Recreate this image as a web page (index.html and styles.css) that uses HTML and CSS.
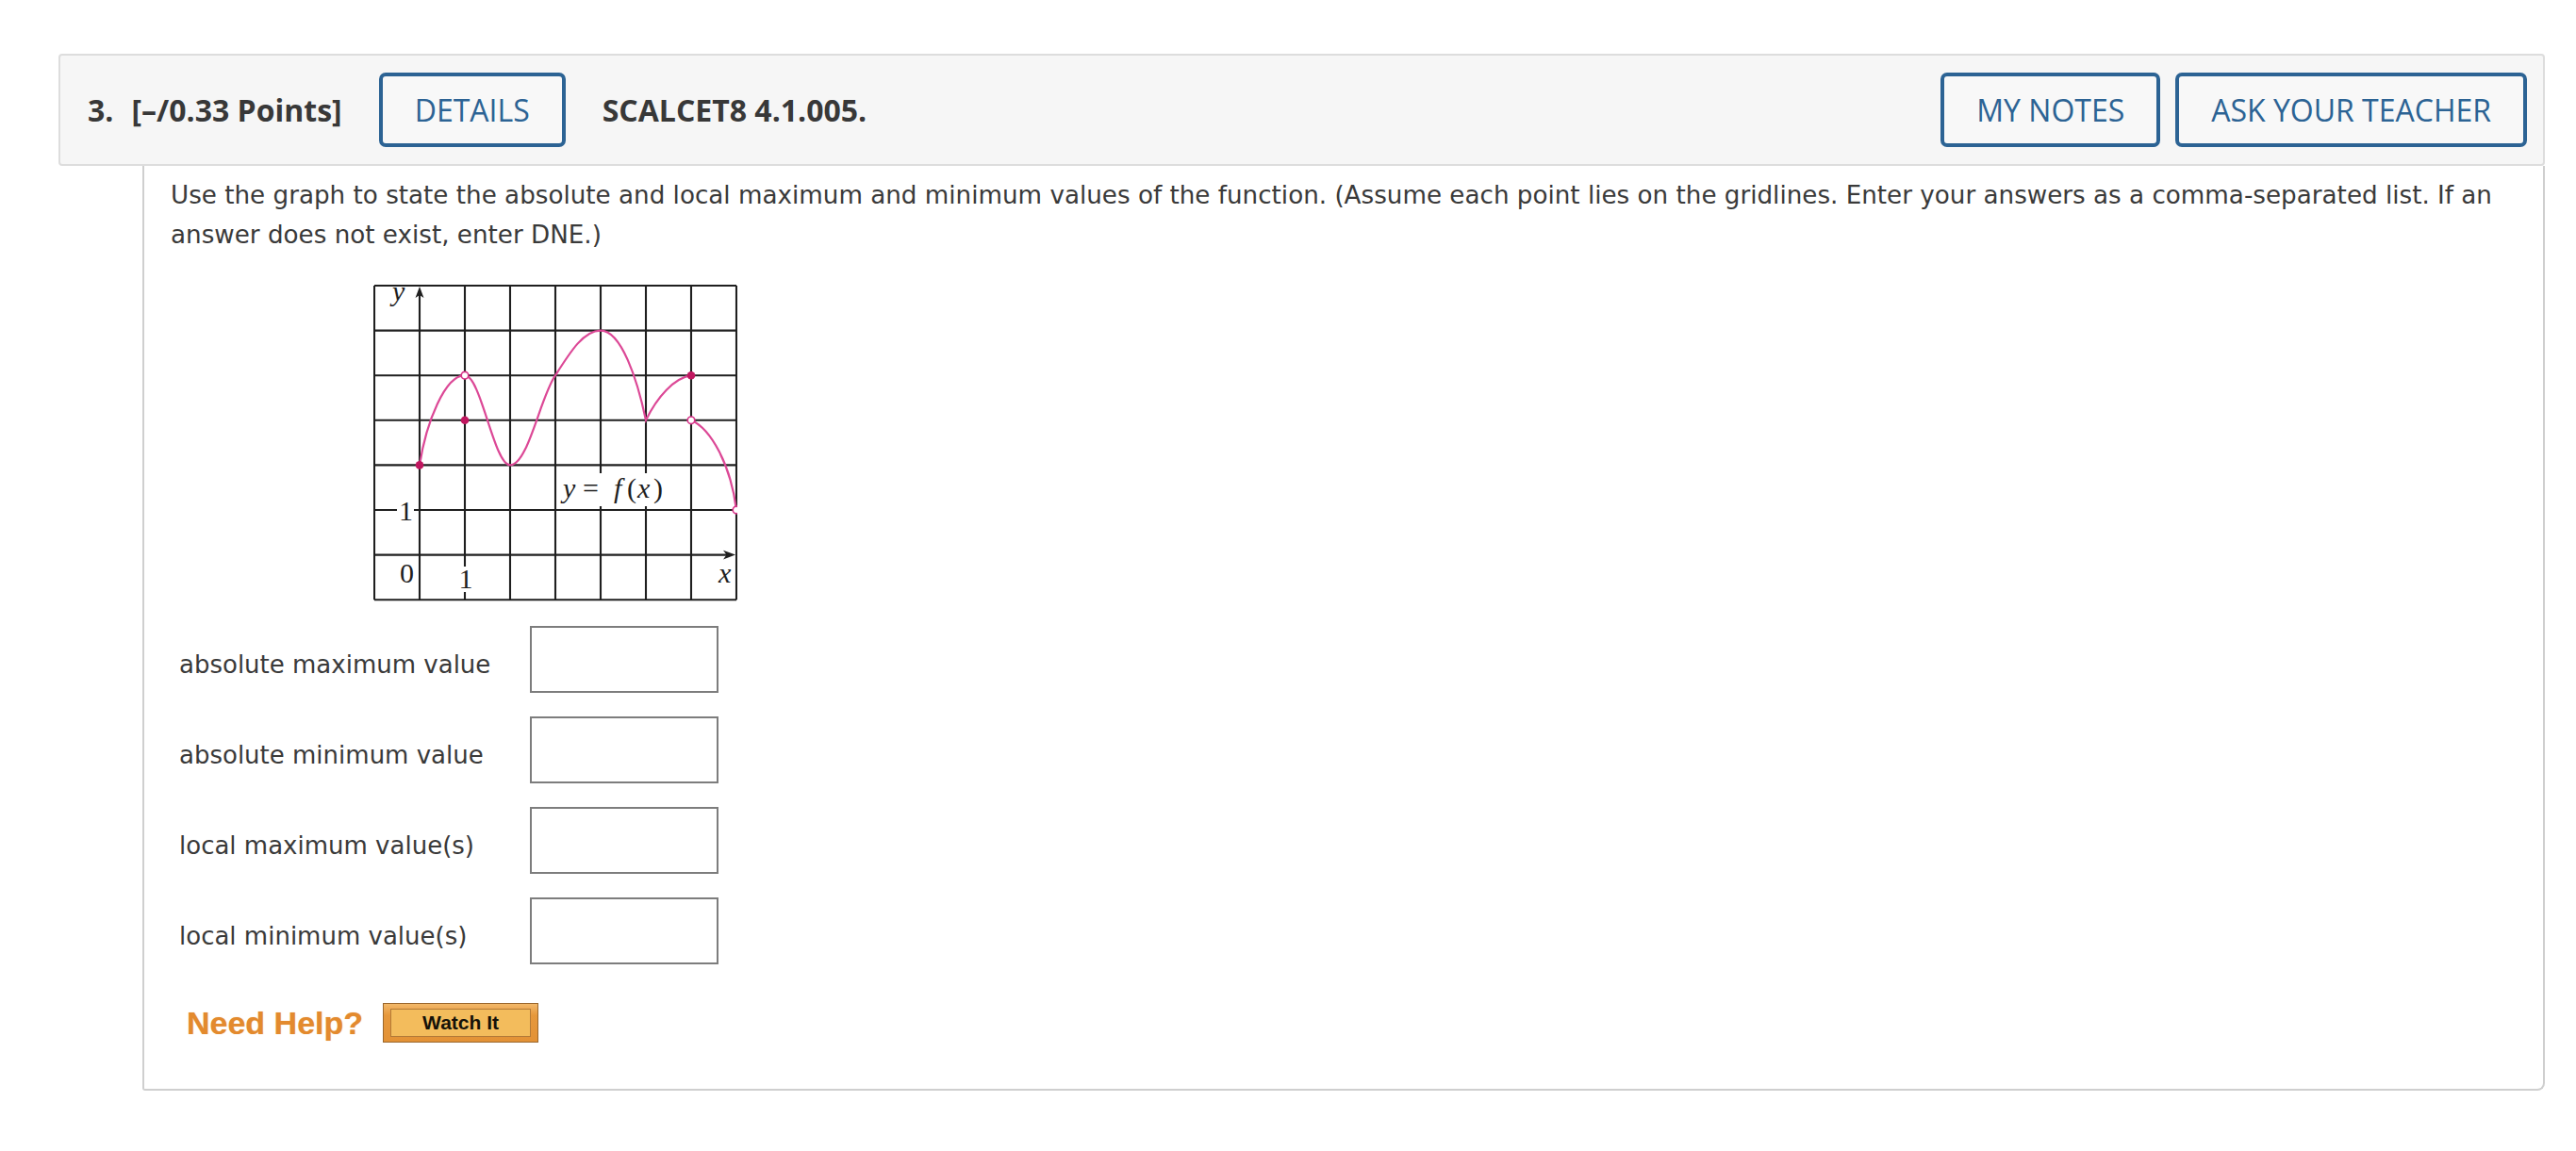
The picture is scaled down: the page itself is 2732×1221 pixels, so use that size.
FILE: index.html
```html
<!DOCTYPE html>
<html lang="en">
<head>
<meta charset="utf-8">
<title>SCALCET8 4.1.005</title>
<link rel="stylesheet" href="styles.css">
</head>
<body>
<div class="page">
  <div class="question">
    <div class="qhead">
      <span class="qnum">3.</span>
      <span class="qpts">[&ndash;/0.33 Points]</span>
      <button class="btn">DETAILS</button>
      <span class="qid">SCALCET8 4.1.005.</span>
      <span class="spacer"></span>
      <button class="btn">MY NOTES</button>
      <button class="btn btn-last">ASK YOUR TEACHER</button>
    </div>
    <div class="qbody">
      <p class="prompt">Use the graph to state the absolute and local maximum and minimum values of the function. (Assume each point lies on the gridlines. Enter your answers as a comma-separated list. If an answer does not exist, enter DNE.)</p>
      <div class="graph">
        <svg width="386" height="352" viewBox="0 0 386 352" xmlns="http://www.w3.org/2000/svg">
          <g transform="translate(1,15)">
            <g class="grid" stroke="#1f1f1f" stroke-width="2.1" fill="none">
              <line x1="0" y1="0" x2="0" y2="333.2"/>
              <line x1="48" y1="8" x2="48" y2="333.2"/>
              <line x1="96" y1="0" x2="96" y2="333.2"/>
              <line x1="144" y1="0" x2="144" y2="333.2"/>
              <line x1="192" y1="0" x2="192" y2="333.2"/>
              <line x1="240" y1="0" x2="240" y2="333.2"/>
              <line x1="288" y1="0" x2="288" y2="333.2"/>
              <line x1="336" y1="0" x2="336" y2="333.2"/>
              <line x1="384" y1="0" x2="384" y2="333.2"/>
              <line x1="0" y1="0" x2="384" y2="0"/>
              <line x1="0" y1="47.6" x2="384" y2="47.6"/>
              <line x1="0" y1="95.2" x2="384" y2="95.2"/>
              <line x1="0" y1="142.8" x2="384" y2="142.8"/>
              <line x1="0" y1="190.4" x2="384" y2="190.4"/>
              <line x1="0" y1="238" x2="384" y2="238"/>
              <line x1="0" y1="285.6" x2="376" y2="285.6"/>
              <line x1="0" y1="333.2" x2="384" y2="333.2"/>
            </g>
            <path d="M48,1 L43.5,13 L48,10 L52.5,13 Z" fill="#1f1f1f"/>
            <path d="M383,285.6 L370,280.8 L373.5,285.6 L370,290.4 Z" fill="#1f1f1f"/>
            <rect x="24" y="225" width="18" height="27" fill="#fff"/>
            <rect x="89" y="298" width="15" height="27" fill="#fff"/>
            <rect x="197" y="199" width="115" height="35" fill="#fff"/>
            <text x="19" y="16" class="gi">y</text>
            <text x="26" y="249" class="gt">1</text>
            <text x="27" y="315" class="gt">0</text>
            <text x="89.5" y="321" class="gt">1</text>
            <text x="365" y="315" class="gi">x</text>
            <text x="200" y="225" class="gi">y</text>
            <text x="221" y="225" class="gt">=</text>
            <text x="254" y="225" class="gi">f</text>
            <text x="268" y="225" class="gt">(</text>
            <text x="279" y="225" class="gi">x</text>
            <text x="296" y="225" class="gt">)</text>
            <path d="M48,190.4 C55,145 75,95.2 96,95.2 C113,95.2 127,190.4 144,190.4 C163,190.4 176,118 192,95.2 C208,70 222,47.6 240,47.6 C262,47.6 279,100 288,142.8 C300,118 318,98 336,95.2 M336,142.8 C357,152 378,190 384,238" fill="none" stroke="#dc4896" stroke-width="2.2"/>
            <circle cx="48" cy="190.4" r="4.3" fill="#c0175f"/>
            <circle cx="96" cy="142.8" r="4.3" fill="#c0175f"/>
            <circle cx="336" cy="95.2" r="4.3" fill="#c0175f"/>
            <circle cx="96" cy="95.2" r="3.8" fill="#fff" stroke="#d8358a" stroke-width="1.7"/>
            <circle cx="336" cy="142.8" r="3.8" fill="#fff" stroke="#d8358a" stroke-width="1.7"/>
            <circle cx="384" cy="238" r="3.8" fill="#fff" stroke="#d8358a" stroke-width="1.7"/>
          </g>
        </svg>
      </div>
      <div class="answers">
        <label class="alabel" for="a1">absolute maximum value</label>
        <input class="abox" id="a1" type="text">
        <label class="alabel" for="a2">absolute minimum value</label>
        <input class="abox" id="a2" type="text">
        <label class="alabel" for="a3">local maximum value(s)</label>
        <input class="abox" id="a3" type="text">
        <label class="alabel" for="a4">local minimum value(s)</label>
        <input class="abox" id="a4" type="text">
      </div>
      <div class="help">
        <span class="help-text">Need Help?</span>
        <button class="watch"><span class="watch-inner">Watch It</span></button>
      </div>
    </div>
  </div>
</div>
</body>
</html>
```
FILE: styles.css
```css
* { box-sizing: border-box; }
html, body { margin: 0; padding: 0; background: #fff; }
.page { padding: 57px 33px 0 62px; }
.question { width: 100%; }

.qhead {
  display: flex;
  align-items: center;
  height: 119px;
  padding: 0 17px 0 29px;
  background: #f6f6f6;
  border: 2px solid #dddddd;
  border-radius: 4px;
  font-family: "Open Sans", "Liberation Sans", sans-serif;
  font-size: 32px;
  color: #383838;
}
.qnum { font-weight: 700; margin-right: 19px; }
.qpts { font-weight: 700; margin-right: 39px; }
.qid { font-weight: 700; margin-left: 39px; }
.spacer { flex: 1; }
.btn {
  height: 79px;
  padding: 0 34px;
  border: 4px solid #2c6394;
  border-radius: 7px;
  background: #f8f8f8;
  color: #2c6394;
  font-family: "Open Sans", "Liberation Sans", sans-serif;
  font-size: 32px;
  font-weight: 500;
  line-height: 1;
  cursor: pointer;
}
.btn-last { margin-left: 16px; }

.qbody {
  margin-left: 89px;
  padding: 10px 28px 49px 28px;
  border: 2px solid #cfcfcf;
  border-top: none;
  border-radius: 0 0 8px 3px;
  font-family: "DejaVu Sans", Verdana, sans-serif;
  color: #3a3a3a;
}
.prompt {
  margin: 0;
  font-size: 26.2px;
  line-height: 42px;
}
.graph { margin: 18px 0 0 215px; line-height: 0; }
.graph svg { display: block; }
.gt { font-family: "Liberation Serif", serif; font-size: 30px; fill: #1f1f1f; }
.gi { font-family: "Liberation Serif", serif; font-size: 30px; font-style: italic; fill: #1f1f1f; }

.answers {
  display: grid;
  grid-template-columns: 381px 200px;
  grid-auto-rows: 71px;
  row-gap: 25px;
  margin-top: 24px;
  align-items: center;
}
.alabel {
  padding-left: 9px;
  padding-top: 10px;
  font-size: 26px;
  color: #3a3a3a;
}
.abox {
  width: 200px;
  height: 71px;
  border: 2px solid #7d7d7d;
  background: #fff;
  font-size: 24px;
  padding: 0 8px;
}

.help {
  display: flex;
  align-items: center;
  margin-top: 41px;
  padding-left: 17px;
}
.help-text {
  font-family: "Liberation Sans", Arial, sans-serif;
  font-weight: 700;
  font-size: 34px;
  color: #e38a2e;
  margin-right: 21px;
  text-shadow: 0 0 1px rgba(227, 138, 46, 0.6);
}
.watch {
  width: 165px;
  height: 42px;
  padding: 5px 7px;
  border: 1px solid #9a672d;
  background: linear-gradient(#f2b86a, #e6983c 30%, #e39236);
  cursor: pointer;
}
.watch-inner {
  display: block;
  width: 100%;
  height: 100%;
  border: 1px solid #b27a38;
  background: #f3bc5c;
  font-family: "Liberation Sans", Arial, sans-serif;
  font-weight: 700;
  font-size: 21px;
  line-height: 28px;
  color: #161209;
  text-align: center;
}
```
